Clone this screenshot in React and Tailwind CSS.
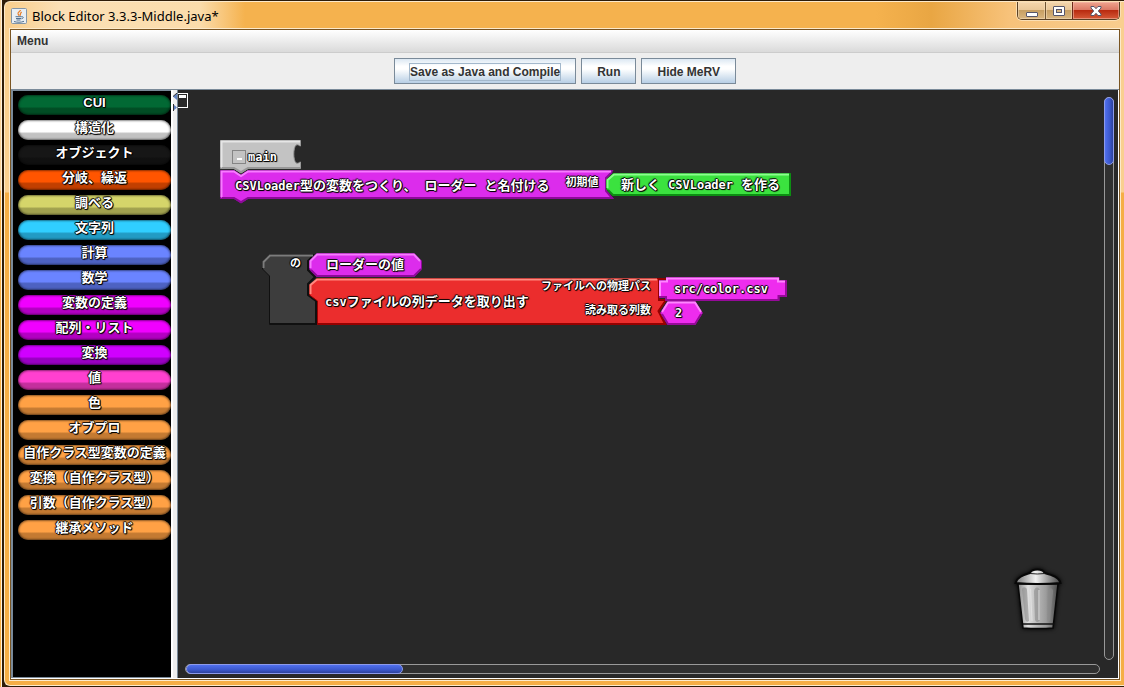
import React from "react";

const OUTLINE =
  "text-white [text-shadow:1px_0_0_#000c,-1px_0_0_#000c,0_1px_0_#000c,0_-1px_0_#000c,1px_1px_1px_#000,-1px_-1px_1px_#0008]";

const categories = [
  { label: "CUI", tone: "bg-[linear-gradient(#026934_58%,#014d24_68%)]" },
  { label: "構造化", tone: "bg-[linear-gradient(#ffffff_58%,#c2c2c2_68%)]" },
  { label: "オブジェクト", tone: "bg-[linear-gradient(#161616_58%,#101010_68%)]" },
  { label: "分岐、繰返", tone: "bg-[linear-gradient(#ff5500_58%,#c23f00_68%)]" },
  { label: "調べる", tone: "bg-[linear-gradient(#d5d56a_58%,#a1a14e_68%)]" },
  { label: "文字列", tone: "bg-[linear-gradient(#30ceff_58%,#229bc4_68%)]" },
  { label: "計算", tone: "bg-[linear-gradient(#6a84ff_58%,#4d62c2_68%)]" },
  { label: "数学", tone: "bg-[linear-gradient(#6a84ff_58%,#4d62c2_68%)]" },
  { label: "変数の定義", tone: "bg-[linear-gradient(#f000ff_58%,#b300c2_68%)]" },
  { label: "配列・リスト", tone: "bg-[linear-gradient(#f000ff_58%,#b300c2_68%)]" },
  { label: "変換", tone: "bg-[linear-gradient(#d000ff_58%,#9900c2_68%)]" },
  { label: "値", tone: "bg-[linear-gradient(#ff40d0_58%,#c42f9d_68%)]" },
  { label: "色", tone: "bg-[linear-gradient(#ffa145_58%,#c47a32_68%)]" },
  { label: "オブプロ", tone: "bg-[linear-gradient(#ffa145_58%,#c47a32_68%)]" },
  { label: "自作クラス型変数の定義", tone: "bg-[linear-gradient(#ffa145_58%,#c47a32_68%)]" },
  { label: "変換（自作クラス型）", tone: "bg-[linear-gradient(#ffa145_58%,#c47a32_68%)]" },
  { label: "引数（自作クラス型）", tone: "bg-[linear-gradient(#ffa145_58%,#c47a32_68%)]" },
  { label: "継承メソッド", tone: "bg-[linear-gradient(#ffa145_58%,#c47a32_68%)]" },
];

function JavaIcon() {
  return (
    <svg width="16" height="16" viewBox="0 0 16 16" aria-hidden="true">
      <rect x="0.5" y="0.5" width="15" height="15" rx="1" fill="#e9eef3" stroke="#8195a8" />
      <path d="M9.500 2c-.2 1.800-3.200 2.200-2.400 4 .3.600.9 1 .7 1.800M10.800 4.200C8.800 5 9.800 6 9 7.600" fill="none" stroke="#e8822e" strokeWidth="1.300" />
      <path d="M4.500 8.700h6.200M5 10.500h5M5.500 12h4M10.700 8.800c2.300-.4 2 1.700-.3 2M3 13.500c2.500 1 7.500 1 10-.2" fill="none" stroke="#53718f" />
    </svg>
  );
}

function WindowButtons() {
  return (
    <div className="flex h-[18px] overflow-hidden rounded-b-[5px] border border-t-0 border-[#5b4123] shadow-[0_0_0_1px_#fbdfb4]">
      <button type="button" aria-label="Minimize" className="flex w-[28px] items-center justify-center border-r border-[#6e5331] bg-[linear-gradient(#f4d5ab_0%,#e9c799_45%,#c79f63_50%,#d9b680_100%)] shadow-[inset_0_0_0_1px_#f6e0bf88]">
        <svg width="12" height="12" viewBox="0 0 12 12" aria-hidden="true">
          <rect x="0.5" y="7.500" width="11" height="4" rx="0.500" fill="#fff" stroke="#56566b" />
        </svg>
      </button>
      <button type="button" aria-label="Maximize" className="flex w-[27px] items-center justify-center border-r border-[#6e2a1a] bg-[linear-gradient(#f4d5ab_0%,#e9c799_45%,#c79f63_50%,#d9b680_100%)] shadow-[inset_0_0_0_1px_#f6e0bf88]">
        <svg width="12" height="10" viewBox="0 0 12 10" aria-hidden="true">
          <rect x="0.5" y="0.5" width="11" height="9" rx="0.500" fill="#fff" stroke="#56566b" />
          <rect x="3.500" y="3.500" width="5" height="3" fill="#d9b680" stroke="#56566b" />
        </svg>
      </button>
      <button type="button" aria-label="Close" className="flex w-[46px] items-center justify-center bg-[linear-gradient(#f0a48f_0%,#dc7a66_45%,#b92b10_50%,#d65a38_100%)] shadow-[inset_0_0_0_1px_#f6c0af88]">
        <svg width="12" height="10" viewBox="0 0 12 10" aria-hidden="true">
          <path d="M1 .5h3L6 2.700 8 .5h3v1.500L8.300 5 11 8v1.500H8L6 7.300 4 9.500H1V8L3.700 5 1 2z" fill="#fff" stroke="#56566b" />
        </svg>
      </button>
    </div>
  );
}

function TitleBar() {
  return (
    <header className="flex h-[27px] items-start justify-between bg-[linear-gradient(90deg,#f9cf8f_0px,#fbe0b6_50px,#fbdcab_190px,#f5b24e_235px,#f5b24e_78%,#e9a643_83%,#f7c27a_90%,#f8cc8d_100%)]">
      <div className="flex h-full items-center gap-[5px] pl-px">
        <JavaIcon />
        <h1 className="font-['Noto_Sans',sans-serif] text-[13px] leading-[16px] text-black">Block Editor 3.3.3-Middle.java*</h1>
      </div>
      <WindowButtons />
    </header>
  );
}

function ToolButton({ children, focused }) {
  return (
    <button type="button" className="h-[26px] border border-[#7a8a99] bg-[linear-gradient(#dce8f3_0%,#ffffff_30%,#ffffff_42%,#b8cfe5_100%)] px-[14px] pt-px text-[12px] leading-[16px] font-bold text-[#333333]">
      <span className={focused ? "block border border-[#a3b8cc]" : "block border border-transparent"}>{children}</span>
    </button>
  );
}

function Sidebar() {
  return (
    <nav aria-label="Block categories" className="flex w-[160px] shrink-0 flex-col gap-[5px] border-t border-b border-l-2 border-[#7a8a99] bg-black pt-1 pl-[5px]">
      {categories.map(({ label, tone }) => (
        <button
          key={label}
          type="button"
          className={`h-5 rounded-[10px] pb-[4px] text-center text-[13px] leading-[16px] font-bold whitespace-nowrap shadow-[inset_0_0_2px_1px_#0007] ${tone} ${OUTLINE}`}
        >
          {label}
        </button>
      ))}
    </nav>
  );
}

function Splitter() {
  return (
    <div role="separator" aria-orientation="vertical" className="w-[7px] shrink-0 border-r border-r-[#7a8a99] bg-[#eeeeee] pt-[3px] pl-[2px] shadow-[inset_2px_0_0_#fff]">
      <svg width="4" height="20" viewBox="0 0 4 20" aria-hidden="true">
        <path d="M4 0v7L0 3.500z" fill="#6382bf" />
        <path d="M0 11v7L4 14.500z" fill="#6382bf" />
        <path d="M4 0 0 3.500M.5 11v7" stroke="#333" fill="none" />
      </svg>
    </div>
  );
}

function Block({ className, path, fill, light, dark, highlight, shade, children }) {
  return (
    <div className={`absolute ${className}`}>
      <svg className="absolute inset-0 h-full w-full overflow-visible" aria-hidden="true">
        <path d={path} fill={fill} stroke={dark} />
        <path d={shade} fill="none" stroke={dark} strokeWidth="2" />
        <path d={highlight} fill="none" stroke={light} strokeWidth="2" />
      </svg>
      <div className={`relative h-full text-[13px] leading-[16px] font-bold whitespace-nowrap ${OUTLINE}`}>{children}</div>
    </div>
  );
}

function Code({ children }) {
  return <span className="font-['DejaVu_Sans_Mono',monospace] text-[12px]">{children}</span>;
}

function Trash() {
  return (
    <svg width="50" height="64" viewBox="0 0 50 64" role="img" aria-label="Trash" className="drop-shadow-[0_0_2px_#000]">
      <defs>
        <linearGradient id="can" x1="0" x2="1">
          <stop offset="0" stopColor="#888" />
          <stop offset="0.25" stopColor="#e0e0e0" />
          <stop offset="0.5" stopColor="#b5b5b5" />
          <stop offset="0.7" stopColor="#9c9c9c" />
          <stop offset="1" stopColor="#4a4a4a" />
        </linearGradient>
        <linearGradient id="lid" x1="0" x2="1">
          <stop offset="0" stopColor="#777" />
          <stop offset="0.45" stopColor="#f2f2f2" />
          <stop offset="1" stopColor="#444" />
        </linearGradient>
      </defs>
      <path d="M4 16 9 60Q25 61 39 60L44 16z" fill="url(#can)" stroke="#080808" strokeWidth="1.500" />
      <path d="M8 22C8 18 13 19 13 22L15 53Q12 55 11 51zM20 24C20 18 26 18 26 24V52Q23 56 21 52zM33 52 34 24C35 18 40 20 39 25L36 52Q34 55 33 52" fill="#8c8c8c" fillOpacity=".6" />
      <path d="M16.500 21 18 53M25 22V52" fill="none" stroke="#e0e0e0" />
      <path d="M9 56H40" stroke="#111" strokeWidth="1.500" />
      <path d="M1.500 15C3 9 10 7 16 5 17 2 20 1.500 23.500 1.500s6 .5 7 3.500C38 7 45 9 46.500 15Q24 17 1.500 15z" fill="url(#lid)" stroke="#080808" strokeWidth="2" />
      <path d="M16 5.500q7 1 15 0" fill="none" stroke="#222" />
    </svg>
  );
}

function Workspace() {
  return (
    <main className="relative flex min-w-0 flex-1 flex-col overflow-hidden bg-[#282828]">
      <button type="button" aria-label="Collapse" className="absolute top-[3px] -left-px h-[15px] w-[11px] border border-white">
        <span className="absolute top-px left-px h-[3px] w-[7px] bg-white" />
      </button>

      <Block
        className="top-[50px] left-[42px] z-10 h-[29px] w-[81px]"
        fill="#c3c3c3" light="#e6e6e6" dark="#989898"
        path="M.5 .5H80.500V6C79 6 79 4 76 5C73 8 73 20 76 23C79 24 79 22 80.500 22V28.500H28L21 33 14 28.500H.5z"
        highlight="M1.500 27V1.500H80" shade="M2 28H14L21 32 28 28H80"
      >
        <div className="flex items-center gap-[2px] pt-[9px] pl-[12px]">
          <button type="button" aria-label="Fold block" className="flex h-[14px] w-[14px] items-center justify-center border border-[#858585] pt-[3px]">
            <span className="h-[2px] w-[5px] bg-white" />
          </button>
          <Code>main</Code>
        </div>
      </Block>

      <Block
        className="top-[80px] left-[42px] h-[29px] w-[394px]"
        fill="#dc2cec" light="#f77cff" dark="#8d0a99"
        path="M.5 .5H14L21 5 28 .5H393L386 8V21L393 28.500H28L21 33 14 28.500H.5z"
        highlight="M1.500 27V1.500H14L21 6 28 1.500H391" shade="M2 28H14L21 32 28 28H392L386 21V8L392 2"
      >
        <div className="flex items-start pt-[8px] pl-[15px]">
          <Code>CSVLoader</Code>
          <span>型の変数をつくり、</span>
          <span className="ml-2">ローダー</span>
          <span className="ml-2">と名付ける</span>
          <span className="-mt-1 ml-4 text-[11px]">初期値</span>
        </div>
      </Block>

      <Block
        className="top-[83px] left-[428px] h-[23px] w-[185px]"
        fill="#3be23f" light="#8bff8e" dark="#0c8f12"
        path="M7 .5H184.500V22.500H7L.5 16V7z"
        highlight="M1.500 15V7L8 1.500H183" shade="M2 17 7 22H184V1"
      >
        <div className="flex items-start gap-2 pt-[4px] pl-[15px]">
          <span>新しく</span>
          <Code>CSVLoader</Code>
          <span>を作る</span>
        </div>
      </Block>

      <Block
        className="top-[164px] left-[84px] h-[71px] w-[55px]"
        fill="#3d3d3d" light="#7c7c7c" dark="#101010"
        path="M8 .5H52L46 7V16L53 23 46 30V41L54 47V70.500H7.500V22L.5 15V8z"
        highlight="M1.500 14V8L8 1.500H51" shade="M8 70H54V47L46 41V30L53 23 46 16V7L51 2"
      >
        <div className="pt-px pr-[16px] text-right text-[11px]">の</div>
      </Block>

      <Block
        className="top-[163px] left-[131px] h-[24px] w-[113px]"
        fill="#dc2cec" light="#f77cff" dark="#8d0a99"
        path="M8 .5H105L112.500 8V16L105 23.500H8L.5 16V8z"
        highlight="M1.500 15V8L8 1.500H105L111 8" shade="M2 17 8 23H105L112 16"
      >
        <div className="pt-[4px] pl-[17px]">ローダーの値</div>
      </Block>

      <Block
        className="top-[188px] left-[131px] h-[47px] w-[358px]"
        fill="#eb2d2d" light="#ff8a80" dark="#960000"
        path="M8 .5H357V1.500H349.500V21.500H357L349.500 33 357 46.500H8.500V23L.5 17V7z"
        highlight="M1.500 16V7L8 1.500H348" shade="M9 46H356L349.500 33 357 22H350V2H357"
      >
        <div className="flex h-full items-center justify-between pr-[16px] pl-[16px]">
          <span className="flex items-center">
            <Code>csv</Code>
            ファイルの列データを取り出す
          </span>
          <span className="flex h-full flex-col items-end gap-2 text-[11px]">
            <span>ファイルへの物理パス</span>
            <span>読み取る列数</span>
          </span>
        </div>
      </Block>

      <Block
        className="top-[187px] left-[480px] h-[24px] w-[129px]"
        fill="#ee2cee" light="#ff86ff" dark="#960a99"
        path="M8.500 .5H121V3.500H128.500V19.500H121V23.500H8.500V20.500H1.500V3.500H8.500z"
        highlight="M2 19V4.500H9V1.500H120V4.500H127" shade="M2 20H8V23H120.500V19H128V4"
      >
        <div className="pt-[4px] pl-[16px]">
          <Code>src/color.csv</Code>
        </div>
      </Block>

      <Block
        className="top-[211px] left-[482px] h-[24px] w-[43px]"
        fill="#ee2cee" light="#ff86ff" dark="#960a99"
        path="M8 .5H35L42.500 12 35 23.500H8L.5 12z"
        highlight="M2 11 8 1.500H35L41 11" shade="M2 13 8 23H35L41 13"
      >
        <div className="pt-[4px] pl-[15px]">
          <Code>2</Code>
        </div>
      </Block>

      <div className="flex flex-1 justify-end pt-[7px] pr-1">
        <div className="flex w-[64px] shrink-0 items-end pb-[28px]">
          <Trash />
        </div>
        <div className="ml-[26px] w-[10px] rounded-full border border-[#999999] bg-[#303030]" role="scrollbar" aria-label="Vertical" aria-controls="root" aria-valuenow={0}>
          <div className="-mx-px -mt-px h-[68px] rounded-full border border-[#8d9bea] bg-[linear-gradient(90deg,#5070ee,#3c58cc_60%,#2c429c)]" />
        </div>
      </div>
      <div className="pt-[4px] pr-[18px] pb-[4px] pl-[7px]">
        <div className="h-[10px] rounded-full border border-[#999999] bg-[#303030]" role="scrollbar" aria-label="Horizontal" aria-controls="root" aria-valuenow={0}>
          <div className="-mt-px h-[10px] w-[217px] rounded-full border border-[#8d9bea] bg-[linear-gradient(#5070ee,#3c58cc_60%,#2c429c)]" />
        </div>
      </div>
    </main>
  );
}

export default function App() {
  return (
    <div className="flex min-h-screen bg-[#2e1c08] font-['Liberation_Sans','Noto_Sans_CJK_JP',sans-serif]">
      <div className="mr-[2px] w-[2px] shrink-0 border-r border-[#fdf0dc] bg-[linear-gradient(#f9d39b_190px,#f5ae46_191px)]" />
      <div className="mt-px mb-px flex min-w-0 flex-1 flex-col rounded-l-[6px] border border-r-0 border-[#fdeacb] bg-[linear-gradient(#f9cf8f_190px,#f5ae46_191px)] pr-1 pb-[5px] pl-[5px]">
        <TitleBar />
        <div className="flex flex-1 flex-col border border-[#7a5522] shadow-[0_0_0_1px_#fdeacb]">
          <div className="flex h-[23px] shrink-0 items-center border-b border-[#cccccc] bg-[linear-gradient(#ffffff,#dadada)] px-[2px]">
            <button type="button" className="px-1 text-[12px] leading-[16px] font-bold text-[#333333]">Menu</button>
          </div>
          <div className="flex h-[37px] shrink-0 items-center justify-center gap-[5px] border-b border-[#7a8a99] bg-[#eeeeee]">
            <ToolButton focused>Save as Java and Compile</ToolButton>
            <ToolButton>Run</ToolButton>
            <ToolButton>Hide MeRV</ToolButton>
          </div>
          <div className="flex flex-1 border-r border-b border-white">
            <Sidebar />
            <Splitter />
            <Workspace />
          </div>
        </div>
      </div>
    </div>
  );
}
